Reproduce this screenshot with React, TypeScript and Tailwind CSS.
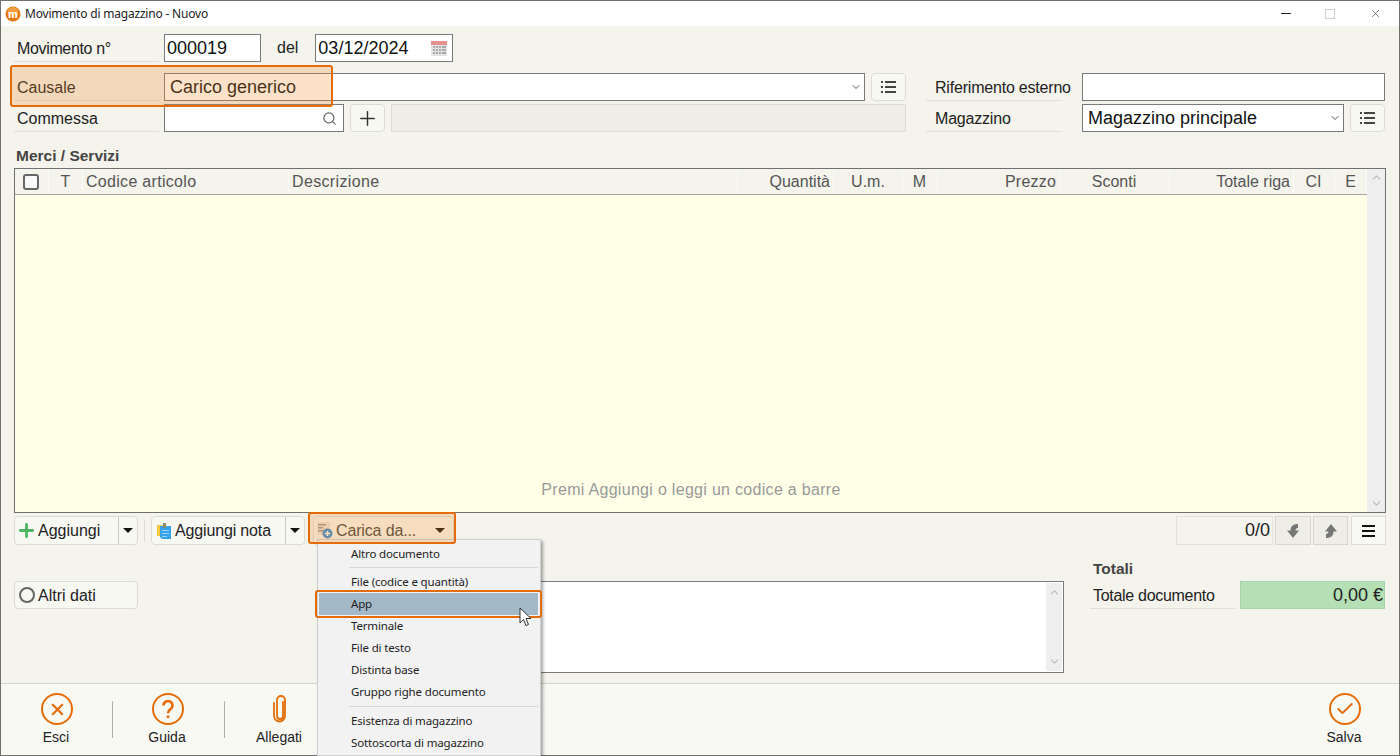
import { ChevronDown, ChevronUp, Search, Plus, X, Check } from "lucide-react";

const columns = [
  { w: "w-[34px]", label: "", cls: "justify-center pr-[2px]" },
  { w: "w-[34px]", label: "T", cls: "justify-center" },
  { w: "w-[206px]", label: "Codice articolo", cls: "pl-[3px] tracking-[0.3px]" },
  { w: "w-[449px]", label: "Descrizione", cls: "pl-[3px] tracking-[0.35px]" },
  { w: "w-[96px]", label: "Quantità", cls: "justify-end pr-[3px]" },
  { w: "w-[69px]", label: "U.m.", cls: "justify-center" },
  { w: "w-[35px]", label: "M", cls: "justify-center pr-[1px]" },
  { w: "w-[122px]", label: "Prezzo", cls: "justify-end pr-[3px] tracking-[0.2px]" },
  { w: "w-[110px]", label: "Sconti", cls: "justify-center pr-[1px]" },
  { w: "w-[124px]", label: "Totale riga", cls: "justify-end pr-[3px]" },
  { w: "w-[41px]", label: "CI", cls: "justify-center pr-[1px]" },
  { w: "w-[32px]", label: "E", cls: "justify-center" },
];

function FieldLabel({ text, className = "w-[145px] pl-[3px]" }: { text: string; className?: string }) {
  return (
    <div className={`${className} h-[28px] flex items-center pt-[2px] whitespace-nowrap border-b border-[#dfdfd8] text-[16px] text-[#222]`}>
      {text}
    </div>
  );
}

function ListIcon() {
  return (
    <svg width="15" height="14" viewBox="0 0 15 14" fill="#444">
      <rect x="0" y="1" width="2" height="2" />
      <rect x="4" y="1" width="11" height="2" />
      <rect x="0" y="6" width="2" height="2" />
      <rect x="4" y="6" width="11" height="2" />
      <rect x="0" y="11" width="2" height="2" />
      <rect x="4" y="11" width="11" height="2" />
    </svg>
  );
}

function ListButton() {
  return (
    <div className="w-[35px] h-[28px] flex items-center justify-center rounded-[4px] border border-[#dcdcd5] bg-[#f8f8f3]">
      <ListIcon />
    </div>
  );
}

function Caret() {
  return <div className="w-0 h-0 border-x-[5px] border-x-transparent border-t-[5px] border-t-[#111]" />;
}

function CalendarIcon() {
  return (
    <svg width="16" height="16" viewBox="0 0 16 16">
      <rect x="0" y="1" width="16" height="15" fill="#e4e4e4" />
      <rect x="0" y="1" width="16" height="4" fill="#e59090" />
      <g fill="#a9a9a9">
        {[6, 9, 12].map((y) =>
          [2, 5, 8, 11, 13].map((x) => <rect key={`${x}-${y}`} x={x} y={y} width="2" height="2" />)
        )}
      </g>
    </svg>
  );
}

function NoteIcon() {
  return (
    <svg width="14" height="17" viewBox="0 0 14 17">
      <rect x="0" y="3" width="8" height="11" fill="#f5c93a" />
      <path d="M3 4h11v13H5l-2-2z" fill="#35a3ea" />
      <rect x="5" y="8" width="7" height="1" fill="#9fd3f5" />
      <rect x="5" y="11" width="7" height="1" fill="#9fd3f5" />
      <rect x="5" y="14" width="5" height="1" fill="#9fd3f5" />
      <rect x="6" y="1" width="3" height="5" fill="#8a8a70" />
    </svg>
  );
}

function LoadIcon() {
  return (
    <svg width="16" height="17" viewBox="0 0 16 17">
      <rect x="0" y="0" width="13" height="13" fill="#ebe3d8" />
      <rect x="1" y="2" width="8" height="1.5" fill="#999" />
      <rect x="1" y="5" width="5" height="1.5" fill="#999" />
      <rect x="1" y="8" width="7" height="1.5" fill="#999" />
      <circle cx="10.5" cy="11.5" r="5" fill="#3d8fd0" />
      <path d="M10.5 9v5M8 11.5h5" stroke="#fff" strokeWidth="1.5" />
    </svg>
  );
}

function BentArrow({ up }: { up?: boolean }) {
  return (
    <svg width="12" height="14" viewBox="0 0 12 14" fill="#777" className={up ? "rotate-180" : ""}>
      <path d="M11 0C7 0 3.5 1.5 3.5 6.5H0L6 14l6-7.5H8.5C8.5 5 9.5 4 11 4z" />
    </svg>
  );
}

function FooterAction({ label, children }: { label: string; children: React.ReactNode }) {
  return (
    <div className="w-[80px] h-full flex flex-col items-center pt-[8px]">
      <div className="h-[34px] flex items-center justify-center">{children}</div>
      <span className="mt-[3px] pr-[2px] text-[14px] leading-[16px] text-[#222]">{label}</span>
    </div>
  );
}

function MenuItem({ text, active }: { text: string; active?: boolean }) {
  return (
    <div className={`h-[22px] flex items-center pl-[32px] text-[11.5px] tracking-[-0.15px] text-[#222] ${active ? "bg-[#a3b9c7]" : ""}`}>
      <span className="-mt-[1px]">{text}</span>
    </div>
  );
}

export default function App() {
  return (
    <div className="relative w-[1400px] h-[756px] overflow-hidden font-['Liberation_Sans',Arial,sans-serif]">
      <div className="w-full h-full flex flex-col border border-[#707070] bg-[#f4f3ec]">
        {/* Title bar */}
        <div className="h-[25px] shrink-0 bg-white flex items-center pl-[4px]">
          <svg width="16" height="16" viewBox="0 0 16 16">
            <circle cx="8" cy="8" r="7.5" fill="#e2760f" />
            <circle cx="8" cy="6.5" r="5.5" fill="#f59c40" />
            <text x="8" y="11.5" textAnchor="middle" fontSize="11" fontWeight="700" fill="#fff">m</text>
          </svg>
          <span className="ml-[4px] font-['Noto_Sans',sans-serif] text-[12px] tracking-[-0.2px] text-[#222]">Movimento di magazzino - Nuovo</span>
          <div className="ml-auto flex items-center pr-[17px]">
            <div className="w-[10px] h-px bg-[#222]" />
            <div className="ml-[34px] w-[10px] h-[10px] border border-[#ccc]" />
            <X size={13} strokeWidth={1} className="ml-[34px] text-[#222]" />
          </div>
        </div>

        {/* Form */}
        <div className="flex-1 flex flex-col pl-[13px] pr-[13px] min-h-0">
          <div className="mt-[8px] h-[28px] flex items-center">
            <FieldLabel text="Movimento n°" className="w-[145px] pl-[3px] tracking-[-0.35px]" />
            <div className="ml-[5px] w-[97px] h-[28px] flex items-center pl-[2px] border border-[#7a7a7a] bg-white text-[18px] text-[#111]">000019</div>
            <span className="ml-[16px] text-[16px] text-[#222]">del</span>
            <div className="ml-[17px] w-[138px] h-[28px] flex items-center justify-between pl-[2px] pr-[5px] border border-[#7a7a7a] bg-white text-[18px] text-[#111]">
              03/12/2024
              <CalendarIcon />
            </div>
          </div>

          <div className="mt-[11px] h-[28px] flex items-center">
            <FieldLabel text="Causale" />
            <div className="ml-[5px] w-[701px] h-[28px] flex items-center justify-between pl-[5px] pr-[2px] border border-[#7a7a7a] bg-white text-[18px] text-[#111]">
              Carico generico
              <ChevronDown size={12} className="text-[#555]" />
            </div>
            <div className="ml-[6px]"><ListButton /></div>
            <div className="ml-[20px] flex items-center">
              <FieldLabel text="Riferimento esterno" className="w-[135px] pl-[9px] tracking-[-0.2px]" />
              <div className="ml-[21px] w-[303px] h-[28px] border border-[#7a7a7a] bg-white" />
            </div>
          </div>

          <div className="mt-[3px] h-[28px] flex items-center">
            <FieldLabel text="Commessa" />
            <div className="ml-[5px] w-[180px] h-[28px] flex items-center justify-end pr-[6px] border border-[#7a7a7a] bg-white">
              <Search size={15} className="text-[#666]" />
            </div>
            <div className="ml-[6px] w-[35px] h-[28px] flex items-center justify-center rounded-[4px] border border-[#dcdcd5] bg-[#f8f8f3]">
              <Plus size={23} strokeWidth={1.5} className="text-[#333]" />
            </div>
            <div className="ml-[6px] w-[515px] h-[28px] border border-[#dcdcd5] bg-[#eeeee7]" />
            <div className="ml-[20px] flex items-center">
              <FieldLabel text="Magazzino" className="w-[135px] pl-[9px] tracking-[-0.2px]" />
              <div className="ml-[21px] w-[262px] h-[28px] flex items-center justify-between pl-[5px] pr-[2px] border border-[#7a7a7a] bg-white text-[18px] text-[#111]">
                Magazzino principale
                <ChevronDown size={12} className="text-[#555]" />
              </div>
              <div className="ml-[6px]"><ListButton /></div>
            </div>
          </div>

          <div className="mt-[15px] h-[18px] flex items-center pl-[2px] text-[15.5px] font-bold text-[#444]">Merci / Servizi</div>

          {/* Table */}
          <div className="mt-[3px] w-[1372px] h-[345px] shrink-0 flex border border-[#707070]">
            <div className="flex-1 flex flex-col min-w-0">
              <div className="h-[26px] flex border-b border-[#a5a5a0]">
                {columns.map((c, i) => (
                  <div key={i} className={`${c.w} h-full flex items-center border-r border-[#fbfbf7] text-[16px] text-[#555] ${c.cls}`}>
                    {i === 0 ? (
                      <div className="w-[16px] h-[16px] rounded-[3px] border-2 border-[#666] bg-[#fafafa]" />
                    ) : (
                      c.label
                    )}
                  </div>
                ))}
              </div>
              <div className="flex-1 bg-[#ffffe8] flex flex-col items-center justify-end pb-[14px] text-[16px] tracking-[0.3px] text-[#999] leading-[16px]">
                Premi Aggiungi o leggi un codice a barre
              </div>
            </div>
            <div className="w-[18px] bg-[#eeeeee] flex flex-col justify-between items-center py-[2px]">
              <ChevronUp size={13} className="text-[#bbb]" />
              <ChevronDown size={13} className="text-[#bbb]" />
            </div>
          </div>

          {/* Row actions */}
          <div className="mt-[3px] h-[29px] shrink-0 flex items-center text-[16px] text-[#222]">
            <div className="w-[124px] h-[29px] flex rounded-[4px] border border-[#dcdcd5] bg-[#f8f8f3]">
              <div className="w-[103px] flex items-center pl-[1px] gap-[1px]">
                <Plus size={21} strokeWidth={3.2} className="text-[#4cb35f]" />
                Aggiungi
              </div>
              <div className="flex-1 flex items-center justify-center border-l border-[#c9c9c2]"><Caret /></div>
            </div>
            <div className="ml-[6px] w-px h-[22px] bg-[#dcdcd5]" />
            <div className="ml-[6px] w-[154px] h-[29px] flex rounded-[4px] border border-[#dcdcd5] bg-[#f8f8f3]">
              <div className="w-[133px] flex items-center pl-[5px] gap-[4px] tracking-[-0.15px]">
                <NoteIcon />
                Aggiungi nota
              </div>
              <div className="flex-1 flex items-center justify-center border-l border-[#c9c9c2]"><Caret /></div>
            </div>
            <div className="ml-[8px] w-[141px] h-[29px] flex items-center justify-between pl-[3px] pr-[8px] rounded-[4px] border border-[#dcdcd5] bg-[#f8f8f3]">
              <div className="flex items-center gap-[3px] text-[#444] tracking-[-0.15px]">
                <LoadIcon />
                Carica da...
              </div>
              <Caret />
            </div>
            <div className="ml-auto w-[97px] h-[29px] flex items-center justify-end pr-[2px] border border-[#e2e2da] text-[18px] text-[#222]">0/0</div>
            <div className="ml-[2px] w-[36px] h-[29px] flex items-center justify-center border border-[#d6d6cf] bg-[#eeeee7]"><BentArrow /></div>
            <div className="ml-[2px] w-[35px] h-[29px] flex items-center justify-center border border-[#d6d6cf] bg-[#eeeee7]"><BentArrow up /></div>
            <div className="ml-[3px] w-[35px] h-[29px] flex flex-col items-center justify-center gap-[3px] border border-[#dcdcd5] bg-[#f9f9f5]">
              <div className="w-[13px] h-[2px] bg-[#111]" />
              <div className="w-[13px] h-[2px] bg-[#111]" />
              <div className="w-[13px] h-[2px] bg-[#111]" />
            </div>
          </div>

          {/* Notes and totals */}
          <div className="flex-1 flex min-h-0">
            <div className="pt-[36px] flex items-start">
              <div className="w-[124px] h-[28px] flex items-center pl-[4px] gap-[3px] rounded-[4px] border border-[#dcdcd5] bg-[#f8f8f3] text-[16px] text-[#222]">
                <div className="w-[16px] h-[16px] rounded-full border-[2.5px] border-[#666]" />
                <span className="pt-[2px]">Altri dati</span>
              </div>
              <div className="ml-[262px] w-[664px] h-[92px] flex justify-end border border-[#7a7a7a] bg-white">
                <div className="w-[16px] my-px mr-px bg-[#eeeeee] flex flex-col justify-between items-center py-[3px]">
                  <ChevronUp size={13} className="text-[#bbb]" />
                  <ChevronDown size={13} className="text-[#bbb]" />
                </div>
              </div>
            </div>
            <div className="ml-[26px] flex flex-col">
              <div className="mt-[16px] h-[16px] flex items-center pl-[3px] text-[15.5px] font-bold text-[#444]">Totali</div>
              <div className="mt-[4px] flex">
                <div className="w-[145px] h-[28px] flex items-center pl-[3px] pt-[2px] border-b border-[#dfdfd8] text-[16px] tracking-[-0.3px] text-[#222]">Totale documento</div>
                <div className="ml-[5px] w-[145px] h-[28px] flex items-center justify-end pr-[1px] border border-[#a5d4a8] bg-[#b5dfb5] text-[18px] text-[#222]">0,00 €</div>
              </div>
            </div>
          </div>
        </div>

        {/* Footer */}
        <div className="h-[72px] shrink-0 flex items-start pl-[16px] pr-[14px] border-t border-[#d5d5cf] bg-[#f9f9f4]">
          <FooterAction label="Esci">
            <div className="w-[32px] h-[32px] rounded-full border-[2.5px] border-[#e36c09] flex items-center justify-center">
              <X size={19} strokeWidth={2.6} className="text-[#e36c09]" />
            </div>
          </FooterAction>
          <div className="ml-[15px] mt-[17px] w-px h-[37px] bg-[#b0b0ab]" />
          <div className="ml-[15px]">
            <FooterAction label="Guida">
              <div className="w-[32px] h-[32px] rounded-full border-[2.5px] border-[#e36c09] flex items-center justify-center">
                <svg width="12" height="19" viewBox="0 0 12 19" fill="none" stroke="#e36c09" strokeWidth="2.6">
                  <path d="M1.5 5.5a4.5 4.5 0 1 1 7 3.7c-1.6 1.1-2.5 2-2.5 4" />
                  <path d="M6 15.5v2.5" />
                </svg>
              </div>
            </FooterAction>
          </div>
          <div className="ml-[16px] mt-[17px] w-px h-[37px] bg-[#b0b0ab]" />
          <div className="ml-[15px]">
            <FooterAction label="Allegati">
              <svg width="16" height="28" viewBox="0 0 16 28" fill="none" stroke="#e36c09" strokeWidth="1.8" strokeLinecap="round">
                <path d="M11 7v14a3 3 0 0 1-6 0V5a4 4 0 0 1 8 0v16a5.5 5.5 0 0 1-11 0V8" />
              </svg>
            </FooterAction>
          </div>
          <div className="ml-auto">
            <FooterAction label="Salva">
              <div className="w-[32px] h-[32px] rounded-full border-[2.5px] border-[#e36c09] flex items-center justify-center">
                <Check size={20} strokeWidth={2.4} className="text-[#e36c09]" />
              </div>
            </FooterAction>
          </div>
        </div>
      </div>

      {/* Dropdown menu over the form */}
      <div className="absolute left-[317px] top-[539px] w-[224px] h-[217px] border border-[#cfcfcf] bg-[#f2f2f2] pt-[3px] pr-[2px] pl-[1px] shadow-[2px_2px_3px_rgba(0,0,0,0.35)] font-['Noto_Sans',sans-serif]">
        <MenuItem text="Altro documento" />
        <div className="ml-[30px] my-[2px] h-px bg-[#d7d7d7]" />
        <div className="mt-[3px]"><MenuItem text="File (codice e quantità)" /></div>
        <MenuItem text="App" active />
        <MenuItem text="Terminale" />
        <MenuItem text="File di testo" />
        <MenuItem text="Distinta base" />
        <MenuItem text="Gruppo righe documento" />
        <div className="ml-[30px] mt-[3px] mb-[3px] h-px bg-[#d7d7d7]" />
        <MenuItem text="Esistenza di magazzino" />
        <MenuItem text="Sottoscorta di magazzino" />
      </div>

      {/* Tutorial highlights */}
      <div className="absolute left-[10px] top-[65px] w-[323px] h-[42px] rounded-[3px] border-2 border-[#e36c09] bg-[#f08c28]/25" />
      <div className="absolute left-[308px] top-[512px] w-[148px] h-[32px] rounded-[3px] border-2 border-[#e36c09] bg-[#f08c28]/25" />
      <div className="absolute left-[315px] top-[590px] w-[227px] h-[28px] rounded-[3px] border-2 border-[#e36c09]" />

      {/* Mouse pointer */}
      <svg className="absolute left-[519px] top-[607px]" width="13" height="20" viewBox="0 0 13 20">
        <path d="M1 1v15l3.5-3.5 2.5 6 2.5-1-2.5-6h5z" fill="#fff" stroke="#333" strokeWidth="1" />
      </svg>
    </div>
  );
}
